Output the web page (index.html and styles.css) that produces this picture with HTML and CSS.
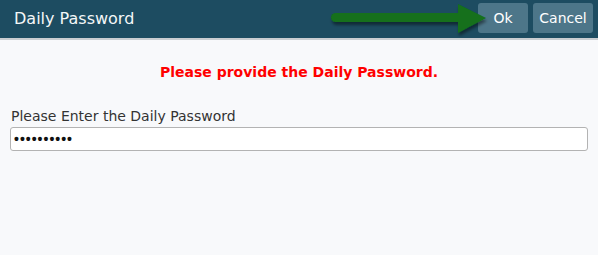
FILE: index.html
```html
<!DOCTYPE html>
<html>
<head>
<meta charset="utf-8">
<link rel="stylesheet" href="styles.css">
</head>
<body>
<div class="dialog">
  <header class="bar">
    <h1 class="title">Daily Password</h1>
    <div class="actions">
      <button class="btn">Ok</button>
      <button class="btn">Cancel</button>
    </div>
    <svg class="arrow" width="170" height="36" viewBox="0 0 170 36">
      <defs>
        <filter id="sh" x="-10%" y="-30%" width="120%" height="160%">
          <feDropShadow dx="1" dy="3" stdDeviation="1.5" flood-color="#000" flood-opacity="0.45"/>
        </filter>
      </defs>
      <g filter="url(#sh)" fill="#136f1c">
        <rect x="11" y="12" width="135" height="9" rx="4.5"/>
        <polygon points="138,3 166,17 138,32"/>
      </g>
    </svg>
  </header>
  <main class="body">
    <p class="warn">Please provide the Daily Password.</p>
    <label class="field">
      <span class="label">Please Enter the Daily Password</span>
      <input class="input" type="password" value="1234567890">
    </label>
  </main>
</div>
</body>
</html>
```

FILE: styles.css
```css
* { box-sizing: border-box; }
html, body { margin: 0; padding: 0; }
body {
  width: 598px;
  height: 255px;
  background: #f8f9fb;
  font-family: "DejaVu Sans", Verdana, sans-serif;
  overflow: hidden;
}
.bar {
  position: relative;
  height: 40px;
  background: #1d4c61;
  border-bottom: 2px solid #c9cdd1;
  display: flex;
  align-items: center;
  justify-content: space-between;
  padding: 0 5px 2px 14px;
}
.title {
  margin: 0;
  font-size: 16px;
  font-weight: normal;
  color: #f4f7f8;
}
.actions {
  display: flex;
  gap: 5px;
}
.btn {
  height: 30px;
  border: none;
  border-radius: 3px;
  background: #4d7689;
  color: #fff;
  font-family: inherit;
  font-size: 14px;
  padding: 0 6px;
}
.btn:first-child { width: 50px; }
.btn:last-child { width: 60px; }
.arrow {
  position: absolute;
  left: 320px;
  top: 1px;
}
.body {
  padding: 0 10px;
}
.warn {
  margin: 24px 0 0;
  line-height: 16px;
  text-align: center;
  color: #ff0000;
  font-weight: bold;
  font-size: 14px;
}
.field {
  display: flex;
  flex-direction: column;
  margin-top: 28px;
}
.label {
  font-size: 14px;
  line-height: 17px;
  color: #333;
  padding-left: 1px;
  margin-bottom: 2px;
}
.input {
  width: 578px;
  height: 24px;
  border: 1px solid #b3b3b3;
  border-radius: 3px;
  background: #fff;
  padding: 0 3px;
  font-size: 14px;
  font-weight: bold;
  letter-spacing: 1px;
  color: #111;
}
```
